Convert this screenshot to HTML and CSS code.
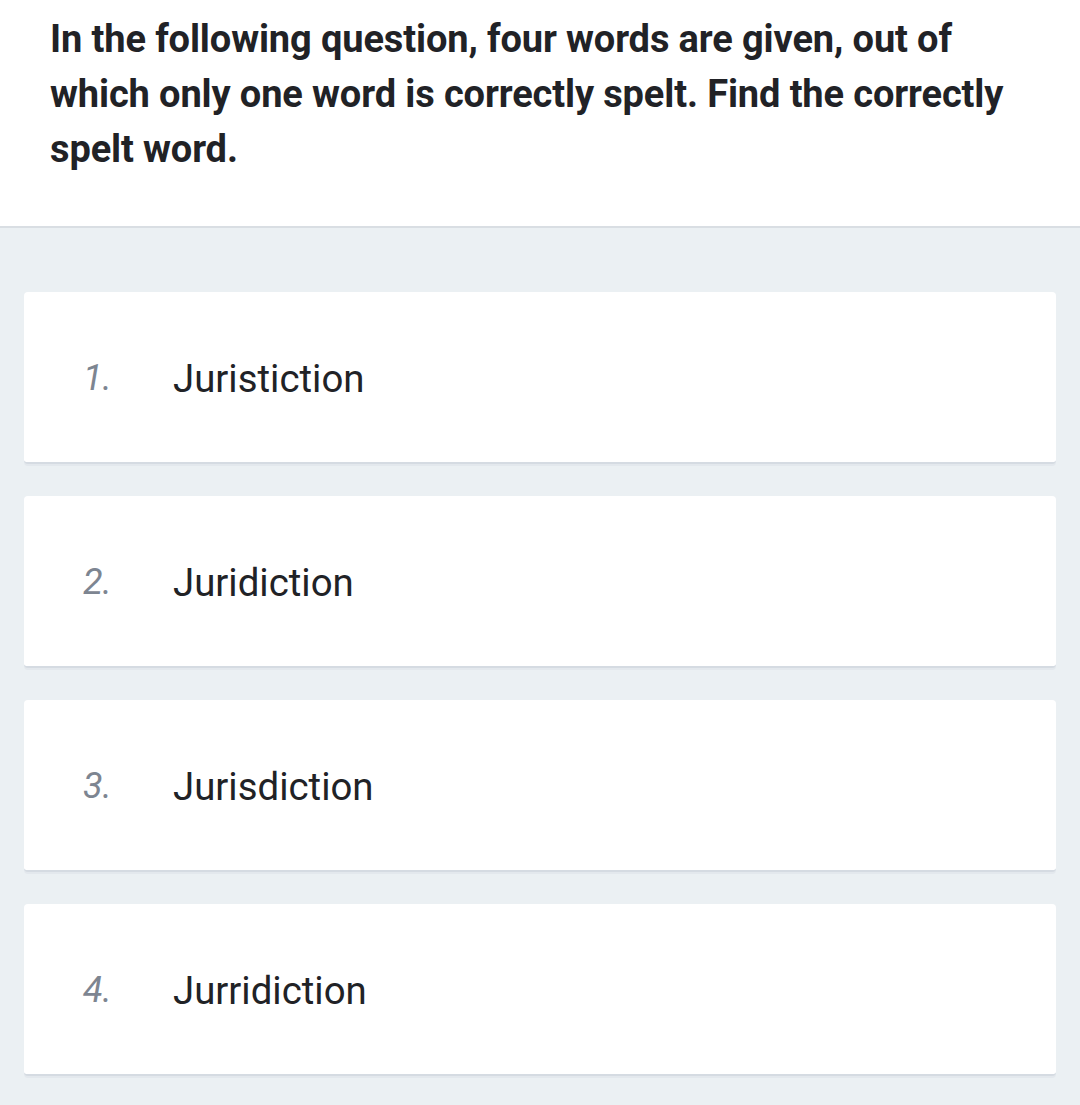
FILE: index.html
```html
<!DOCTYPE html>
<html>
<head>
<meta charset="utf-8">
<link rel="stylesheet" href="styles.css">
</head>
<body>
<header class="question">
  <p class="question-text">In the following question, four words are given, out of which only one word is correctly spelt. Find the correctly spelt word.</p>
</header>
<main class="options">
  <div class="option"><span class="num">1.</span><span class="label">Juristiction</span></div>
  <div class="option"><span class="num">2.</span><span class="label">Juridiction</span></div>
  <div class="option"><span class="num">3.</span><span class="label">Jurisdiction</span></div>
  <div class="option"><span class="num">4.</span><span class="label">Jurridiction</span></div>
</main>
</body>
</html>
```

FILE: styles.css
```css
html, body {
  margin: 0;
  padding: 0;
}
body {
  background: #ebf0f3;
  font-family: Roboto, "Liberation Sans", Arial, sans-serif;
  color: #212226;
  width: 1080px;
  min-height: 1105px;
}
.question {
  background: #ffffff;
  border-bottom: 2px solid #d9dee3;
  padding: 12px 40px 49px 50px;
}
.question-text {
  margin: 0;
  font-size: 38px;
  font-weight: 700;
  line-height: 55px;
  letter-spacing: -0.12px;
}
.options {
  display: flex;
  flex-direction: column;
  gap: 32px;
  padding: 64px 24px 0 24px;
}
.option {
  background: #ffffff;
  border-radius: 4px;
  height: 170px;
  border-bottom: 2px solid #d5dbe2;
  box-shadow: 0 2px 0 #e3e8ed;
  display: flex;
  align-items: center;
  padding-left: 59px;
}
.num {
  width: 90px;
  font-size: 36px;
  font-style: italic;
  color: #7d8591;
  padding-top: 2px;
}
.label {
  font-size: 38.4px;
  color: #212226;
  padding-top: 2px;
}
```
